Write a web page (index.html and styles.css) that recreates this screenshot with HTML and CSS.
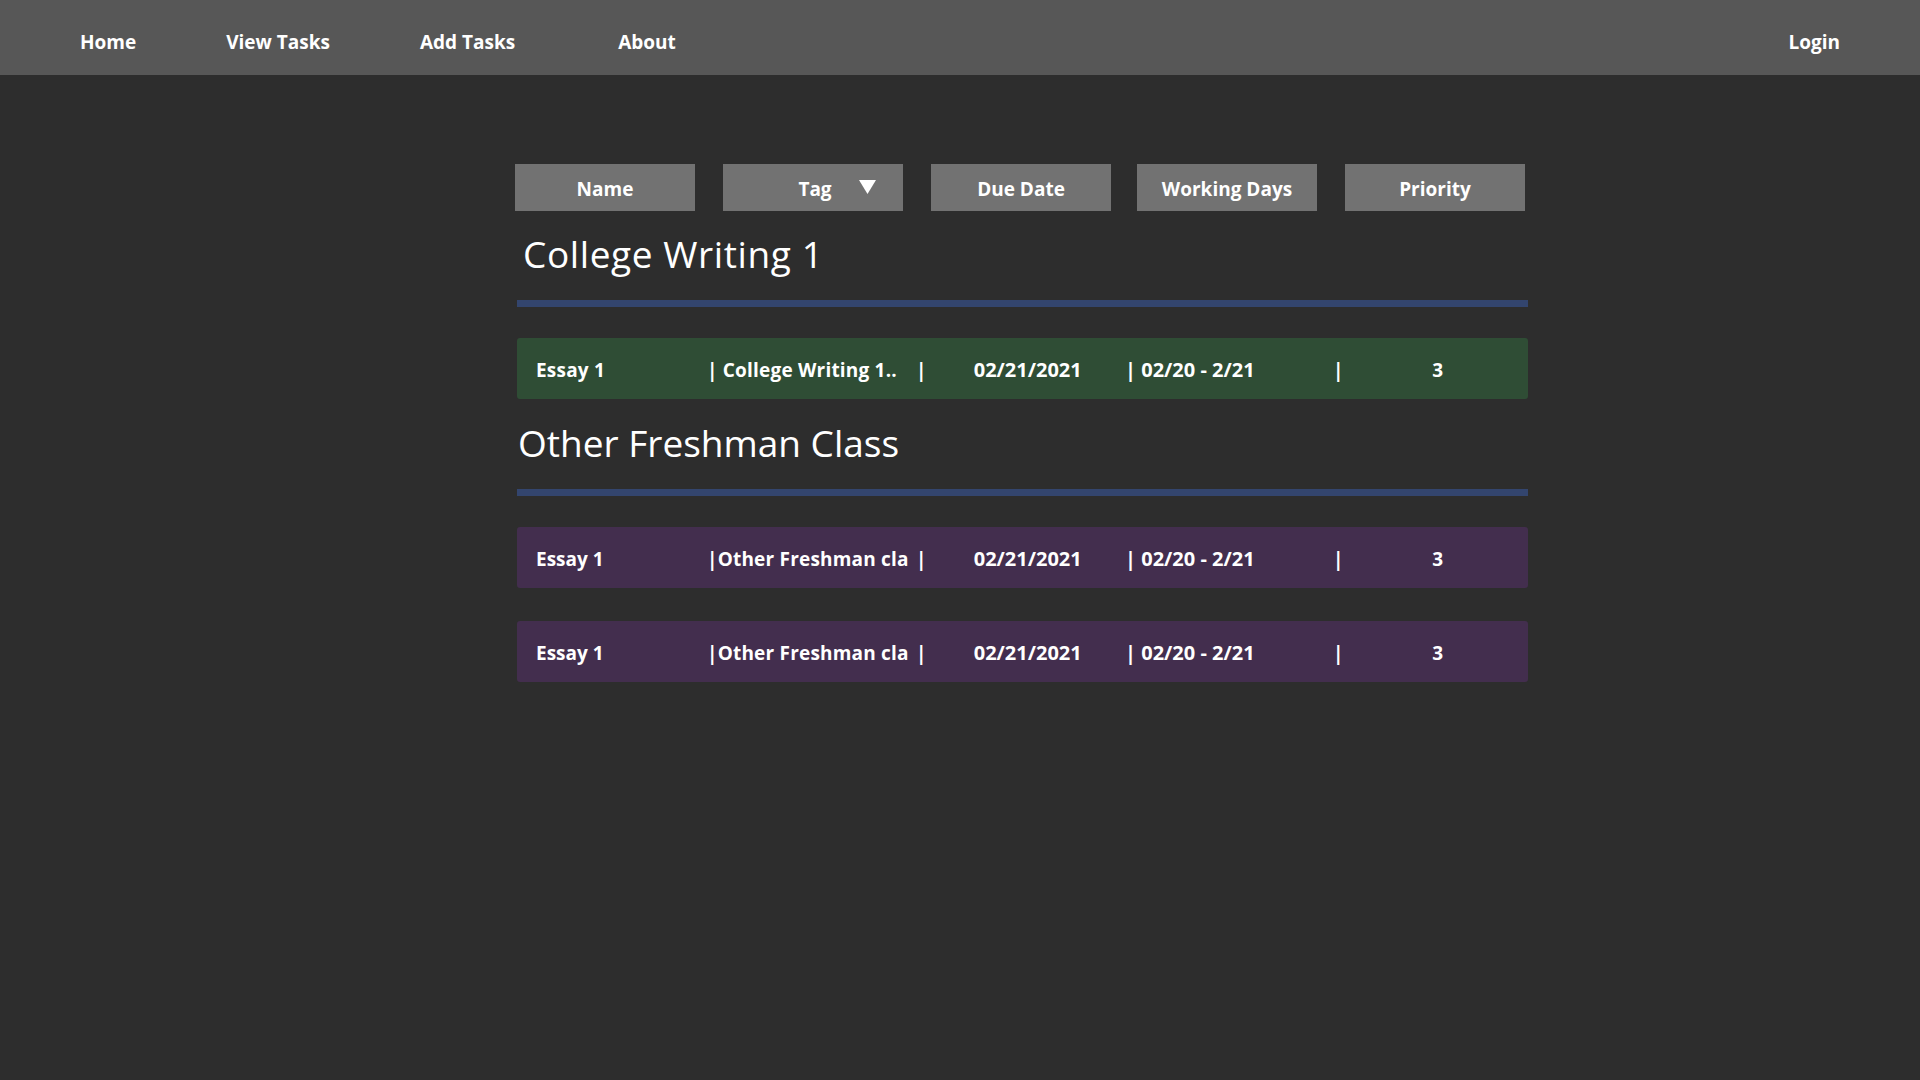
FILE: index.html
```html
<!DOCTYPE html>
<html lang="en">
<head>
<meta charset="utf-8">
<title>View Tasks</title>
<link rel="stylesheet" href="styles.css">
</head>
<body>
<nav class="topnav">
  <ul class="nav-links">
    <li><a href="#">Home</a></li>
    <li><a href="#">View Tasks</a></li>
    <li><a href="#">Add Tasks</a></li>
    <li class="nav-about"><a href="#">About</a></li>
  </ul>
  <a class="nav-login" href="#">Login</a>
</nav>

<main class="tasks">
  <div class="sort-bar">
    <button class="sort-btn">Name</button>
    <button class="sort-btn sort-tag">Tag
      <svg class="tag-arrow" width="17" height="14" viewBox="0 0 17 14"><polygon points="0,0 17,0 8.5,14" fill="#ffffff"/></svg>
    </button>
    <button class="sort-btn">Due Date</button>
    <button class="sort-btn sort-tight">Working Days</button>
    <button class="sort-btn">Priority</button>
  </div>

  <section class="group">
    <h2 class="group-title group-title-indent">College Writing 1</h2>
    <div class="group-rule"></div>
    <div class="task task-green">
      <div class="cell cell-tag">Essay 1</div>
      <div class="cell cell-tag">| College Writing 1..</div>
      <div class="cell cell-center cell-num"><span class="sep">|</span><span class="val">02/21/2021</span></div>
      <div class="cell cell-num">| 02/20 - 2/21</div>
      <div class="cell cell-center"><span class="sep">|</span><span class="val">3</span></div>
    </div>
  </section>

  <section class="group group-next">
    <h2 class="group-title">Other Freshman Class</h2>
    <div class="group-rule"></div>
    <div class="task task-purple">
      <div class="cell">Essay 1</div>
      <div class="cell cell-tag">|Other Freshman cla</div>
      <div class="cell cell-center cell-num"><span class="sep">|</span><span class="val">02/21/2021</span></div>
      <div class="cell cell-num">| 02/20 - 2/21</div>
      <div class="cell cell-center"><span class="sep">|</span><span class="val">3</span></div>
    </div>
    <div class="task task-purple task-next">
      <div class="cell">Essay 1</div>
      <div class="cell cell-tag">|Other Freshman cla</div>
      <div class="cell cell-center cell-num"><span class="sep">|</span><span class="val">02/21/2021</span></div>
      <div class="cell cell-num">| 02/20 - 2/21</div>
      <div class="cell cell-center"><span class="sep">|</span><span class="val">3</span></div>
    </div>
  </section>
</main>
</body>
</html>
```

FILE: styles.css
```css
* { box-sizing: border-box; }

html, body {
  margin: 0;
  padding: 0;
  background: #2d2d2d;
  color: #ffffff;
  font-family: "Open Sans", "Noto Sans", sans-serif;
}

.topnav {
  height: 75px;
  background: #575757;
  display: flex;
  align-items: center;
  justify-content: space-between;
  padding: 9px 80px 0 80px;
}

.nav-links {
  list-style: none;
  margin: 0;
  padding: 0;
  display: flex;
  gap: 90px;
}

.nav-about { margin-left: 13px; }

.topnav a {
  color: #ffffff;
  text-decoration: none;
  font-weight: 700;
  font-size: 19px;
}

.tasks {
  margin-left: 515px;
  width: 1013px;
  padding-top: 89px;
}

.sort-bar {
  display: flex;
  gap: 28px;
}

.sort-btn {
  position: relative;
  width: 180px;
  height: 47px;
  border: 0;
  background: #727272;
  color: #ffffff;
  font-family: "Open Sans", "Noto Sans", sans-serif;
  font-weight: 700;
  font-size: 19px;
  padding: 3px 0 0 0;
}

.sort-tight { margin-left: -2px; }

.sort-tag { padding-left: 4px; }

.tag-arrow {
  position: absolute;
  left: 136px;
  top: 16px;
}

.group-title {
  margin: 17px 0 0 0;
  padding-left: 3px;
  font-weight: 400;
  font-size: 37px;
  line-height: 52px;
  height: 52px;
}

.group-title-indent {
  padding-left: 8px;
  letter-spacing: 0.6px;
}

.group-next .group-title { margin-top: 18px; }

.group-rule {
  margin: 20px 0 0 2px;
  width: 1011px;
  height: 7px;
  background: #33456e;
}

.task {
  margin: 31px 0 0 2px;
  width: 1011px;
  height: 61px;
  border-radius: 3px;
  display: grid;
  grid-template-columns: 171px 209px 209px 208px 1fr;
  align-items: center;
  padding: 2px 0 0 19px;
  font-weight: 700;
  font-size: 19px;
  white-space: nowrap;
}

.task-next { margin-top: 33px; }

.task-green { background: #2f4d35; }
.task-purple { background: #432e4e; }

.cell-tag { letter-spacing: 0.2px; }

.cell-num .val,
.cell-num { font-size: 20px; }

.cell-center .sep { font-size: 19px; }

.cell-center {
  display: flex;
  align-items: baseline;
}

.cell-center .val {
  flex: 1;
  text-align: center;
  padding-left: 4px;
}
```
